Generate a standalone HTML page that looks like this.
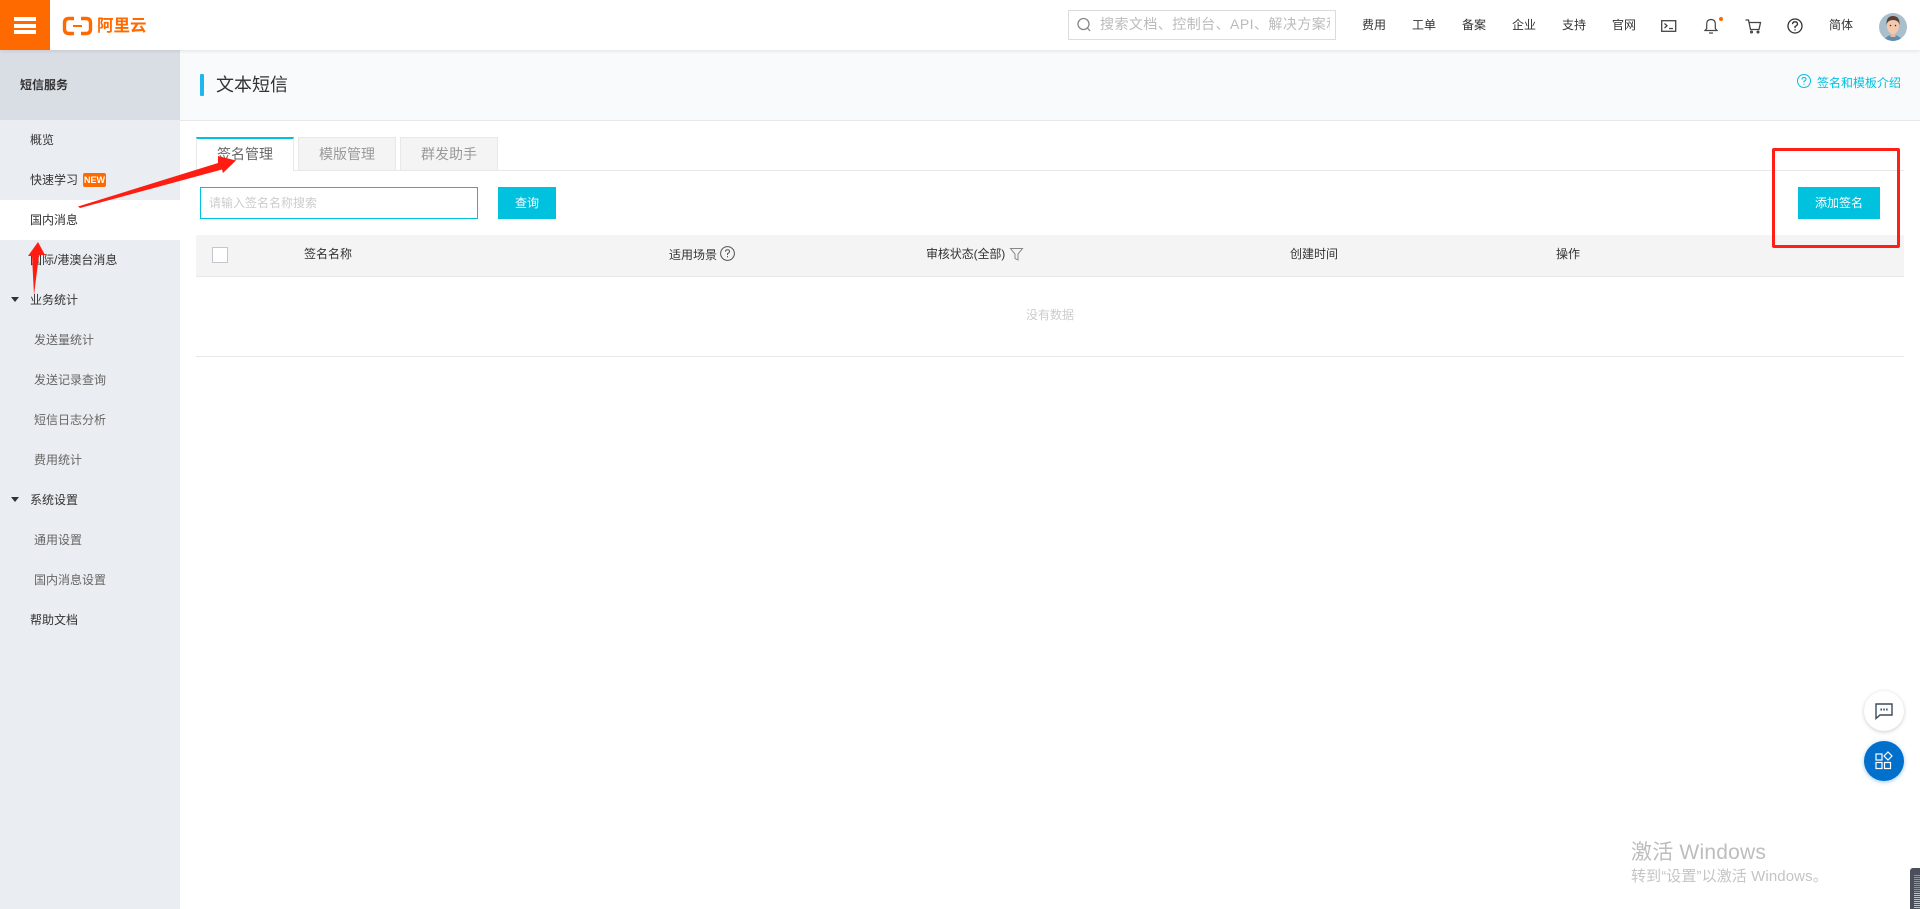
<!DOCTYPE html>
<html lang="zh-CN">
<head>
<meta charset="utf-8">
<title>文本短信</title>
<style>
html,body{margin:0;padding:0;width:1920px;height:909px;overflow:hidden;background:#fff}
body{position:relative;font-family:"Liberation Sans","Noto Sans CJK SC",sans-serif;font-size:12px;color:#333}
.a{position:absolute}
.t{position:absolute;white-space:nowrap;line-height:20px;height:20px}
.sub{color:#666}
svg{position:absolute;overflow:visible}
</style>
</head>
<body>
<!-- page header band -->
<div class="a" style="left:180px;top:50px;width:1740px;height:70px;background:#f9fafc;border-bottom:1px solid #e8e8e8;box-sizing:content-box"></div>
<!-- sidebar -->
<div class="a" style="left:0;top:50px;width:180px;height:859px;background:#eaedf1"></div>
<div class="a" style="left:0;top:50px;width:180px;height:70px;background:#d9dee4"></div>
<div class="a" style="left:0;top:200px;width:180px;height:40px;background:#fff"></div>
<div class="t" style="left:20px;top:75px;font-weight:bold;color:#333">短信服务</div>
<div class="t" style="left:30px;top:130px">概览</div>
<div class="t" style="left:30px;top:170px">快速学习</div>
<div class="a" style="left:83px;top:173px;width:23px;height:14px;background:#ff6a00;border-radius:2px;color:#fff;font-size:9px;font-weight:bold;line-height:14px;text-align:center">NEW</div>
<div class="t" style="left:30px;top:210px">国内消息</div>
<div class="t" style="left:30px;top:250px">国际/港澳台消息</div>
<div class="t" style="left:30px;top:290px">业务统计</div>
<div class="a" style="left:11px;top:297px;width:0;height:0;border-left:4px solid transparent;border-right:4px solid transparent;border-top:5px solid #333"></div>
<div class="t sub" style="left:34px;top:330px">发送量统计</div>
<div class="t sub" style="left:34px;top:370px">发送记录查询</div>
<div class="t sub" style="left:34px;top:410px">短信日志分析</div>
<div class="t sub" style="left:34px;top:450px">费用统计</div>
<div class="t" style="left:30px;top:490px">系统设置</div>
<div class="a" style="left:11px;top:497px;width:0;height:0;border-left:4px solid transparent;border-right:4px solid transparent;border-top:5px solid #333"></div>
<div class="t sub" style="left:34px;top:530px">通用设置</div>
<div class="t sub" style="left:34px;top:570px">国内消息设置</div>
<div class="t" style="left:30px;top:610px">帮助文档</div>

<!-- top bar -->
<div class="a" style="left:0;top:0;width:1920px;height:50px;background:#fff;box-shadow:0 1px 4px rgba(0,0,0,.1)"></div>
<div class="a" style="left:0;top:0;width:50px;height:50px;background:#ff6a00"></div>
<div class="a" style="left:14px;top:17px;width:22px;height:3.5px;background:#fff"></div>
<div class="a" style="left:14px;top:24px;width:22px;height:3.5px;background:#fff"></div>
<div class="a" style="left:14px;top:30px;width:22px;height:3.5px;background:#fff"></div>
<svg style="left:0;top:0" width="100" height="50" fill="none" stroke="#ff6a00">
<path d="M74 18.500H69Q64.500 18.500 64.500 23V29Q64.500 33.500 69 33.500H74" stroke-width="3.400"/>
<path d="M81 18.500H86Q90.500 18.500 90.500 23V29Q90.500 33.500 86 33.500H81" stroke-width="3.400"/>
<path d="M73 26H82" stroke-width="2"/>
</svg>
<div class="t" style="left:97px;top:16px;font-size:16.500px;font-weight:bold;color:#ff6a00">阿里云</div>

<div class="a" style="left:1068px;top:10px;width:268px;height:30px;box-sizing:border-box;border:1px solid #dcdcdc"></div>
<div class="a" style="left:1100px;top:11px;width:230px;height:28px;overflow:hidden">
<div class="t" style="left:0;top:3px;font-size:14px;letter-spacing:.45px;color:#bbb">搜索文档、控制台、API、解决方案和资讯</div>
</div>
<svg style="left:1077px;top:17px" width="14" height="16" fill="none" stroke="#888" stroke-width="1.300"><circle cx="6.500" cy="7" r="5.500"/><path d="M10.500 11L13 14"/></svg>
<div class="t" style="left:1362px;top:15px">费用</div>
<div class="t" style="left:1412px;top:15px">工单</div>
<div class="t" style="left:1462px;top:15px">备案</div>
<div class="t" style="left:1512px;top:15px">企业</div>
<div class="t" style="left:1562px;top:15px">支持</div>
<div class="t" style="left:1612px;top:15px">官网</div>
<svg style="left:1661px;top:20px" width="16" height="12" fill="none" stroke="#444" stroke-width="1.300"><rect x=".7" y=".7" width="14" height="10.600"/><path d="M3.500 3.500L6 5.800L3.500 8M8 8.500H12"/></svg>
<svg style="left:1704px;top:18px" width="14" height="16" fill="none" stroke="#444" stroke-width="1.200"><path d="M1 12.500H13L11.300 10.500V6Q11.300 1.500 7 1.500Q2.700 1.500 2.700 6V10.500Z"/><path d="M5 15H9"/></svg>
<div class="a" style="left:1719px;top:17px;width:4px;height:4px;border-radius:50%;background:#ff6a00"></div>
<svg style="left:1745px;top:19px" width="17" height="15" fill="none" stroke="#444" stroke-width="1.300"><path d="M.5 1H3.500L5.500 10.500H14L15.500 3.500H4"/><circle cx="6.500" cy="13" r=".9"/><circle cx="13" cy="13" r=".9"/></svg>
<svg style="left:1787px;top:18px" width="18" height="18" fill="none" stroke="#333" stroke-width="1.300"><circle cx="8" cy="8" r="7"/><path d="M5.500 6.200Q5.700 3.800 8 3.800Q10.500 3.800 10.500 6Q10.500 7.200 8 8.600V10"/><path d="M8 11.200V12.500"/></svg>
<div class="t" style="left:1829px;top:15px">简体</div>
<svg style="left:1879px;top:13px" width="28" height="28"><defs><clipPath id="c"><circle cx="14" cy="14" r="14"/></clipPath></defs><g clip-path="url(#c)"><rect width="28" height="28" fill="#a9c0cc"/><path d="M5 28Q7 22 14 22Q21 22 23 28Z" fill="#5f8db0"/><rect x="11.500" y="18" width="5" height="6" fill="#e8b99c"/><ellipse cx="14" cy="13" rx="6" ry="8" fill="#f3c9ae"/><path d="M7.500 12Q7 3 14 3Q21 3 20.500 12Q19.500 7 14 7Q8.500 7 7.500 12Z" fill="#5b4034"/><circle cx="11.500" cy="12.500" r=".8" fill="#333"/><circle cx="16.500" cy="12.500" r=".8" fill="#333"/></g></svg>

<!-- page header -->
<div class="a" style="left:200px;top:74px;width:4px;height:22px;background:#1fb6f0;border-radius:1px"></div>
<div class="t" style="left:216px;top:74px;font-size:18px;line-height:22px;height:22px;color:#333">文本短信</div>
<svg style="left:1797px;top:74px" width="15" height="15" fill="none" stroke="#00c1de"><circle cx="7" cy="7" r="6.500"/><path d="M5 5.500Q5 3.500 7 3.500Q9 3.500 9 5.200Q9 6.300 7 7.300V8.500M7 9.700V10.800"/></svg>
<div class="t" style="left:1817px;top:73px;color:#00c1de">签名和模板介绍</div>

<!-- tabs -->
<div class="a" style="left:196px;top:170px;width:1708px;height:1px;background:#e8e8e8"></div>
<div class="a" style="left:196px;top:137px;width:98px;height:34px;box-sizing:border-box;background:#fff;border-top:2px solid #00c1de;border-left:1px solid #e8e8e8;border-right:1px solid #e8e8e8"></div>
<div class="a" style="left:298px;top:137px;width:98px;height:33px;box-sizing:border-box;background:#f4f4f4;border:1px solid #e8e8e8;border-bottom:0"></div>
<div class="a" style="left:400px;top:137px;width:98px;height:33px;box-sizing:border-box;background:#f4f4f4;border:1px solid #e8e8e8;border-bottom:0"></div>
<div class="t" style="left:217px;top:144px;font-size:14px;color:#666">签名管理</div>
<div class="t" style="left:319px;top:144px;font-size:14px;color:#999">模版管理</div>
<div class="t" style="left:421px;top:144px;font-size:14px;color:#999">群发助手</div>

<!-- search -->
<div class="a" style="left:200px;top:187px;width:278px;height:32px;box-sizing:border-box;border:1px solid #00c1de;background:#fff"></div>
<div class="t" style="left:209px;top:193px;color:#ccc">请输入签名名称搜索</div>
<div class="a" style="left:498px;top:187px;width:58px;height:32px;background:#00c1de;color:#fff;line-height:32px;text-align:center">查询</div>
<div class="a" style="left:1798px;top:187px;width:82px;height:32px;background:#00c1de;color:#fff;line-height:32px;text-align:center">添加签名</div>

<!-- table -->
<div class="a" style="left:196px;top:235px;width:1708px;height:42px;box-sizing:border-box;background:#f4f4f4;border-bottom:1px solid #e8e8e8"></div>
<div class="a" style="left:212px;top:247px;width:16px;height:16px;box-sizing:border-box;border:1px solid #c4c6cf;background:#fff"></div>
<div class="t" style="left:304px;top:244px">签名名称</div>
<div class="t" style="left:669px;top:245px">适用场景</div>
<svg style="left:720px;top:246px" width="15" height="15" fill="none" stroke="#555"><circle cx="7.500" cy="7.500" r="6.900"/><path d="M5.500 5.800Q5.500 3.800 7.500 3.800Q9.500 3.800 9.500 5.500Q9.500 6.600 7.500 7.700V9M7.500 10V11.200"/></svg>
<div class="t" style="left:926px;top:244px;letter-spacing:-.1px">审核状态(全部)</div>
<svg style="left:1010px;top:248px" width="13" height="13" fill="none" stroke="#888"><path d="M.5 .5H12.500L8 6V12L5 10.500V6Z"/></svg>
<div class="t" style="left:1290px;top:244px">创建时间</div>
<div class="t" style="left:1556px;top:244px">操作</div>
<div class="t" style="left:1026px;top:305px;color:#ccc">没有数据</div>
<div class="a" style="left:196px;top:356px;width:1708px;height:1px;background:#e8e8e8"></div>

<!-- annotations -->
<div class="a" style="left:1772px;top:148px;width:128px;height:100px;box-sizing:border-box;border:3px solid #ff1f14;border-radius:2px"></div>
<svg style="left:0;top:0" width="300" height="320" fill="#ff1d12">
<path d="M78 206.500L218 163L218 156L236 160.500L223 173L222 169.500L80 208Z"/>
<path d="M34 295L32 256H28L38 242L45 255H39Z"/>
</svg>

<!-- floating buttons -->
<div class="a" style="left:1864px;top:691px;width:40px;height:40px;border-radius:50%;background:#fff;box-shadow:0 1px 4px rgba(0,0,0,.2)"></div>
<svg style="left:1875px;top:703px" width="18" height="17" fill="none" stroke="#3a4a5a" stroke-width="1.400"><path d="M1 1H17V12H5L1 15.500Z"/><path d="M5.500 6.500H7M8.300 6.500H9.800M11.100 6.500H12.600" stroke-width="2"/></svg>
<div class="a" style="left:1864px;top:741px;width:40px;height:40px;border-radius:50%;background:#0070cc;box-shadow:0 1px 4px rgba(0,112,204,.4)"></div>
<svg style="left:1875px;top:751px" width="20" height="20" fill="none" stroke="#fff" stroke-width="1.200"><rect x="1" y="3" width="6" height="6"/><rect x="1" y="11.500" width="6" height="6"/><rect x="9.500" y="11.500" width="6" height="6"/><path d="M13 1L17 5L13 9L9 5Z"/></svg>

<!-- windows watermark -->
<div class="t" style="left:1631px;top:840px;font-size:21px;line-height:26px;height:26px;color:#bdbdbd;letter-spacing:.2px">激活 Windows</div>
<div class="t" style="left:1631px;top:867px;font-size:15px;color:#c4c4c4;letter-spacing:.1px">转到“设置”以激活 Windows。</div>

<!-- corner widget -->
<div class="a" style="left:1910px;top:868px;width:10px;height:41px;background:#4a4f5a;border-radius:3px 0 0 0"></div>
<div class="a" style="left:1914px;top:875px;width:6px;height:34px;background:repeating-linear-gradient(to bottom,#8d929c 0,#8d929c 1px,#4a4f5a 1px,#4a4f5a 2px)"></div>
<div class="a" style="left:1914px;top:893px;width:6px;height:16px;background:repeating-linear-gradient(to bottom,#b9d47c 0,#b9d47c 1px,#4a4f5a 1px,#4a4f5a 2px)"></div>
</body>
</html>
